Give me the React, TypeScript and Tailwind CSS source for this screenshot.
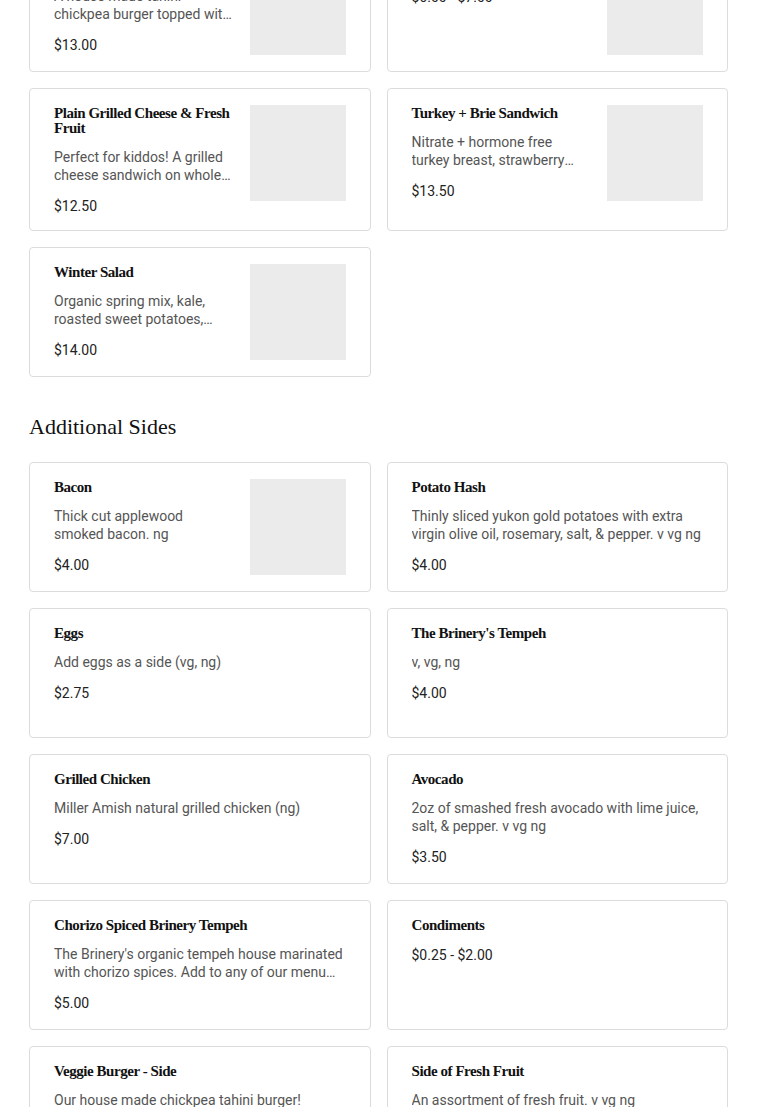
import React from 'react';

type Item = { name: string; desc?: string; price: string; img?: boolean };

const mains: Item[] = [
  { name: 'Veggie Burger', desc: 'A house made tahini chickpea burger topped with avocado, greens, and house sauce.', price: '$13.00', img: true },
  { name: 'Kids Breakfast', price: '$6.00 - $7.00', img: true },
  { name: 'Plain Grilled Cheese & Fresh Fruit', desc: 'Perfect for kiddos! A grilled cheese sandwich on whole wheat bread with a side of fresh fruit.', price: '$12.50', img: true },
  { name: 'Turkey + Brie Sandwich', desc: 'Nitrate + hormone free turkey breast, strawberry jam, brie, and greens.', price: '$13.50', img: true },
  { name: 'Winter Salad', desc: 'Organic spring mix, kale, roasted sweet potatoes, pecans and goat cheese.', price: '$14.00', img: true },
];

const sides: Item[] = [
  { name: 'Bacon', desc: 'Thick cut applewood smoked bacon. ng', price: '$4.00', img: true },
  { name: 'Potato Hash', desc: 'Thinly sliced yukon gold potatoes with extra virgin olive oil, rosemary, salt, & pepper. v vg ng', price: '$4.00' },
  { name: 'Eggs', desc: 'Add eggs as a side (vg, ng)', price: '$2.75' },
  { name: "The Brinery's Tempeh", desc: 'v, vg, ng', price: '$4.00' },
  { name: 'Grilled Chicken', desc: 'Miller Amish natural grilled chicken (ng)', price: '$7.00' },
  { name: 'Avocado', desc: '2oz of smashed fresh avocado with lime juice, salt, & pepper. v vg ng', price: '$3.50' },
  { name: 'Chorizo Spiced Brinery Tempeh', desc: "The Brinery's organic tempeh house marinated with chorizo spices. Add to any of our menu items.", price: '$5.00' },
  { name: 'Condiments', price: '$0.25 - $2.00' },
  { name: 'Veggie Burger - Side', desc: 'Our house made chickpea tahini burger!', price: '$6.00' },
  { name: 'Side of Fresh Fruit', desc: 'An assortment of fresh fruit. v vg ng', price: '$4.00' },
];

const Card = ({ item }: { item: Item }) => (
  <div className="flex gap-4 min-h-[130px] border border-[#dcdcdc] rounded-[4px] bg-white px-6 pt-[17px] pb-[14px]">
    <div className="flex-1 min-w-0">
      <h3 className="text-[15px] leading-[15px] font-bold text-[#111] tracking-[-0.45px]" style={{ fontFamily: '"Liberation Serif", serif' }}>
        {item.name}
      </h3>
      {item.desc && (
        <p className="mt-3 text-[14px] leading-[18px] text-[#555] line-clamp-2">{item.desc}</p>
      )}
      <div className="mt-3 text-[14px] leading-[20px] text-[#222]">{item.price}</div>
    </div>
    {item.img && <div className="w-24 h-24 -mt-px shrink-0 bg-[#ebebeb]" />}
  </div>
);

export default function App() {
  return (
    <div className="bg-white min-h-screen" style={{ fontFamily: 'Roboto, "Liberation Sans", sans-serif' }}>
      <div className="w-[699px] ml-[29px] -mt-[58px]">
        <div className="grid grid-cols-2 gap-4">
          {mains.map((m) => (
            <Card key={m.name} item={m} />
          ))}
        </div>
        <h2 className="mt-[34px] mb-[19px] text-[22px] leading-8 text-[#111]" style={{ fontFamily: '"Liberation Serif", serif' }}>
          Additional Sides
        </h2>
        <div className="grid grid-cols-2 gap-4 pb-10">
          {sides.map((s) => (
            <Card key={s.name} item={s} />
          ))}
        </div>
      </div>
    </div>
  );
}
